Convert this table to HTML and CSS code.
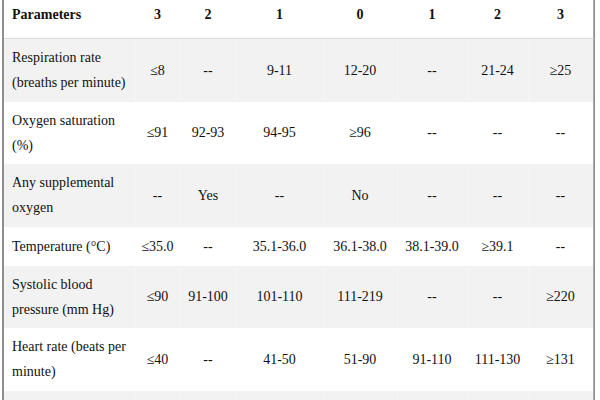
FILE: index.html
```html
<!DOCTYPE html>
<html>
<head>
<meta charset="utf-8">
<link rel="stylesheet" href="styles.css">
</head>
<body>
<div class="frame">
  <table class="news">
    <colgroup>
      <col class="c-param">
      <col class="c-45">
      <col class="c-56">
      <col class="c-87">
      <col class="c-74">
      <col class="c-70">
      <col class="c-61">
      <col class="c-64">
    </colgroup>
    <thead>
      <tr>
        <th class="param">Parameters</th>
        <th>3</th>
        <th>2</th>
        <th>1</th>
        <th>0</th>
        <th>1</th>
        <th>2</th>
        <th>3</th>
      </tr>
    </thead>
    <tbody>
      <tr>
        <td class="param">Respiration rate<br>(breaths per minute)</td>
        <td>≤8</td><td>--</td><td>9-11</td><td>12-20</td><td>--</td><td>21-24</td><td>≥25</td>
      </tr>
      <tr>
        <td class="param">Oxygen saturation<br>(%)</td>
        <td>≤91</td><td>92-93</td><td>94-95</td><td>≥96</td><td>--</td><td>--</td><td>--</td>
      </tr>
      <tr>
        <td class="param">Any supplemental<br>oxygen</td>
        <td>--</td><td>Yes</td><td>--</td><td>No</td><td>--</td><td>--</td><td>--</td>
      </tr>
      <tr class="single">
        <td class="param">Temperature (°C)</td>
        <td>≤35.0</td><td>--</td><td>35.1-36.0</td><td>36.1-38.0</td><td>38.1-39.0</td><td>≥39.1</td><td>--</td>
      </tr>
      <tr>
        <td class="param">Systolic blood<br>pressure (mm Hg)</td>
        <td>≤90</td><td>91-100</td><td>101-110</td><td>111-219</td><td>--</td><td>--</td><td>≥220</td>
      </tr>
      <tr>
        <td class="param">Heart rate (beats per<br>minute)</td>
        <td>≤40</td><td>--</td><td>41-50</td><td>51-90</td><td>91-110</td><td>111-130</td><td>≥131</td>
      </tr>
      <tr class="tail">
        <td></td><td></td><td></td><td></td><td></td><td></td><td></td><td></td>
      </tr>
    </tbody>
  </table>
</div>
</body>
</html>
```

FILE: styles.css
```css
html, body {
  margin: 0;
  padding: 0;
  background: #ffffff;
}

body {
  font-family: "Liberation Serif", "Times New Roman", serif;
  font-size: 14px;
  color: #111111;
  overflow: hidden;
}

.frame {
  margin-left: 2px;
  width: 589px;
  border-left: 2px solid #8e8e8e;
  border-right: 2px solid #8e8e8e;
  height: 400px;
}

.news {
  width: 589px;
  border-collapse: collapse;
  table-layout: fixed;
}

.c-param { width: 131px; }
.c-45 { width: 45px; }
.c-56 { width: 56px; }
.c-87 { width: 87px; }
.c-74 { width: 74px; }
.c-70 { width: 70px; }
.c-61 { width: 61px; }
.c-64 { width: 65px; }

.news th,
.news td {
  font-family: "Liberation Serif", "Times New Roman", serif;
  text-align: center;
  vertical-align: middle;
  line-height: 25px;
  padding: 6px 0 6.5px;
  white-space: nowrap;
  border-right: 1px solid rgba(255, 255, 255, 0.25);
}

.news th {
  font-weight: bold;
  padding: 2px 0 11px;
  border-bottom: 1px solid #dcdcdc;
}

.news .param {
  text-align: left;
  padding-left: 8px;
}

.news tbody tr:nth-child(odd) {
  background: #f2f2f2;
}

.news tr.single td {
  padding-top: 7px;
  padding-bottom: 7px;
}

.news tr.tail td {
  height: 50px;
  padding: 0;
}
```
